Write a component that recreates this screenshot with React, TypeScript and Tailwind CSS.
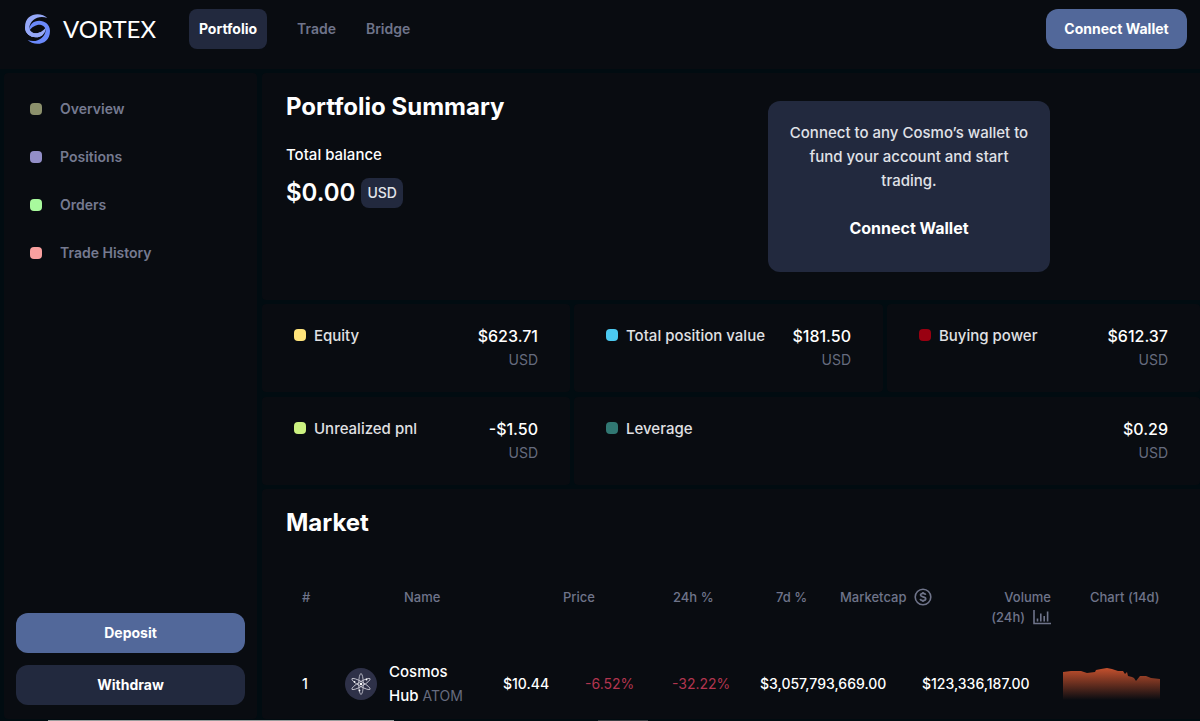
import React, { useState } from 'react';

interface Stat {
  label: string;
  value: string;
  dot: string;
  wide?: boolean;
}

const navItems = ['Portfolio', 'Trade', 'Bridge'];

const sideItems = [
  { label: 'Overview', dot: 'bg-[#8c916c]' },
  { label: 'Positions', dot: 'bg-[#938fc8]' },
  { label: 'Orders', dot: 'bg-[#a8fa9d]' },
  { label: 'Trade History', dot: 'bg-[#f9a09f]' }
];

const stats: Stat[] = [
  { label: 'Equity', value: '$623.71', dot: 'bg-[#ffe57c]' },
  { label: 'Total position value', value: '$181.50', dot: 'bg-[#4cc9f0]' },
  { label: 'Buying power', value: '$612.37', dot: 'bg-[#990011]' },
  { label: 'Unrealized pnl', value: '-$1.50', dot: 'bg-[#ccf281]' },
  { label: 'Leverage', value: '$0.29', dot: 'bg-[#317873]', wide: true }
];

const LOGO_SWIRL =
  'M142 54 C125 36 75 36 75 82 C75 102 92 112 107 112 C125 112 138 100 138 81 C130 94 115 101 105 100 C94 98 87 91 88 82 C91 60 115 44 142 54 Z';

const Logo = () => (
  <svg viewBox="72 39 81 96" className="h-8 w-[27px]" aria-hidden="true">
    <path d={LOGO_SWIRL} fill="#95a8f8" />
    <path d={LOGO_SWIRL} fill="#6b8afb" transform="rotate(180 112.5 87)" />
    <path d="M75 82 C75 102 92 112 107 112 C116 112 124 109 129 104 L120 97 C114 100 109 100 105 100 C94 98 87 91 88 82 Z" fill="#95a8f8" />
  </svg>
);

const DollarIcon = () => (
  <svg viewBox="0 0 18 18" className="h-[18px] w-[18px]" fill="none" stroke="currentColor" aria-hidden="true">
    <circle cx="9" cy="9" r="7.8" strokeWidth="1.6" />
    <path d="M11.6 6.9 C11.4 5.9 10.4 5.4 9 5.4 C7.5 5.4 6.5 6 6.5 7.1 C6.5 9.5 11.7 8.2 11.7 10.8 C11.7 12 10.6 12.6 9 12.6 C7.5 12.6 6.4 12 6.3 10.9 M9 4 V5.6 M9 12.4 V14" strokeWidth="1.7" />
  </svg>
);

const BarsIcon = () => (
  <svg viewBox="0 0 18 16" className="h-4 w-[18px]" fill="none" stroke="currentColor" strokeWidth="1.6" aria-hidden="true">
    <path d="M1 1 V14.5 H18" />
    <path d="M4.5 12.5 V9.5 M7.8 12.5 V4.5 M11.2 12.5 V7 M14.6 12.5 V2.5" />
  </svg>
);

const AtomIcon = () => (
  <svg viewBox="0 0 32 32" className="h-8 w-8 shrink-0" aria-hidden="true">
    <circle cx="16" cy="16" r="16" fill="#2e3148" />
    <g fill="none" stroke="#cfcfd9" strokeWidth="0.8">
      <ellipse cx="16" cy="16" rx="2.3" ry="10.5" />
      <ellipse cx="16" cy="16" rx="2.3" ry="10.5" transform="rotate(60 16 16)" />
      <ellipse cx="16" cy="16" rx="2.3" ry="10.5" transform="rotate(120 16 16)" />
    </g>
    <g fill="#ffffff">
      <circle cx="16" cy="16" r="1.2" />
      <circle cx="21.5" cy="11.5" r="0.9" />
      <circle cx="9.5" cy="13.8" r="0.9" />
      <circle cx="14.5" cy="22.5" r="0.9" />
    </g>
  </svg>
);

const PriceChart = () => (
  <svg viewBox="0 0 97 32" preserveAspectRatio="none" className="h-8 w-full" role="img" aria-label="14 day chart">
    <defs>
      <linearGradient id="price-fill" x1="0" y1="0" x2="0" y2="1">
        <stop offset="0" stopColor="#c4502d" />
        <stop offset="1" stopColor="#c4502d" stopOpacity="0" />
      </linearGradient>
    </defs>
    <path
      d="M0 4 L8 3 L18 3 L24 5 L32 4 L33 2 L38 1 L44 0 L49 1 L55 3 L60 3 L62 6 L64 4 L65 8 L69 9 L71 10 L73 13 L77 8 L83 8 L88 10 L97 11 V32 H0 Z"
      fill="url(#price-fill)"
    />
  </svg>
);

const App: React.FC = () => {
  const [active, setActive] = useState('Portfolio');

  return (
    <div className="flex min-h-screen flex-col bg-[#010c11] font-['Inter',sans-serif] text-sm text-white">
      {/* Header */}
      <header className="flex h-[69px] items-start justify-between bg-[#090c11] pt-[9px] pr-[13px] pl-6">
        <div className="flex items-center">
          <a href="#" className="flex items-center gap-3">
            <Logo />
            <span className="w-[94px] font-['Lato',sans-serif] text-2xl">VORTEX</span>
          </a>
          <nav className="ml-8 flex items-center gap-[30px]">
            {navItems.map(item => (
              <button
                key={item}
                type="button"
                onClick={() => setActive(item)}
                className={`h-10 rounded-lg ${active === item
                  ? 'w-[78px] bg-[#22293e] font-bold text-white'
                  : 'font-semibold text-[#6f748a]'
                  }`}
              >
                {item}
              </button>
            ))}
          </nav>
        </div>
        <button type="button" className="h-10 w-[141px] rounded-xl bg-[#52689a] font-bold">
          Connect Wallet
        </button>
      </header>

      <div className="flex flex-1 pt-1 pl-1">
        {/* Sidebar */}
        <aside className="flex w-[253px] shrink-0 flex-col justify-between rounded bg-[#090c11] px-3 pt-6 pb-[14px]">
          <ul className="space-y-6 pl-[14px]">
            {sideItems.map(item => (
              <li key={item.label}>
                <a href="#" className="flex h-6 items-center gap-[18px] font-semibold text-[#757a90]">
                  <span className={`h-3 w-3 rounded ${item.dot}`} />
                  {item.label}
                </a>
              </li>
            ))}
          </ul>
          <div className="flex flex-col gap-3">
            <button type="button" className="h-10 rounded-xl bg-[#52689a] font-bold">Deposit</button>
            <button type="button" className="h-10 rounded-xl bg-[#22293e] font-bold">Withdraw</button>
          </div>
        </aside>

        <main className="ml-[5px] flex min-w-0 flex-1 flex-col gap-1">
          {/* Summary */}
          <section className="flex min-h-[227px] items-start justify-between rounded-l bg-[#090c11] pr-[150px] pl-6">
            <div className="pt-4">
              <h1 className="text-2xl font-bold leading-9">Portfolio Summary</h1>
              <p className="mt-[18px] text-[15px] font-medium leading-6">Total balance</p>
              <div className="mt-[10px] flex items-center gap-[6px]">
                <span className="text-2xl font-semibold">$0.00</span>
                <span className="rounded-lg bg-[#22293e] px-[6px] py-[5px] font-medium text-[#e3e5ea]">USD</span>
              </div>
            </div>
            <div className="mt-7 w-[282px] rounded-xl bg-[#22293e] px-5 pt-5 pb-8 text-center">
              <p className="text-[15px] font-medium leading-6 text-[#e0e2e8]">
                Connect to any Cosmo’s wallet to fund your account and start trading.
              </p>
              <button type="button" className="mt-[23px] text-base font-bold leading-6">Connect Wallet</button>
            </div>
          </section>

          {/* Stats */}
          <section className="grid grid-cols-[308fr_309fr_313fr] gap-x-1 gap-y-[5px]">
            {stats.map(stat => (
              <div
                key={stat.label}
                className={`flex justify-between rounded bg-[#090c11] px-8 py-5 leading-6 ${stat.wide ? 'col-span-2' : ''}`}
              >
                <div className="flex items-start gap-2">
                  <span className={`mt-[5px] h-3 w-3 rounded ${stat.dot}`} />
                  <span className="text-[15px] font-medium leading-6 text-[#e0e1e4]">{stat.label}</span>
                </div>
                <div className="text-right">
                  <p className="text-base font-medium leading-6">{stat.value}</p>
                  <p className="text-[#666b7e]">USD</p>
                </div>
              </div>
            ))}
          </section>

          {/* Market */}
          <section className="flex-1 rounded-l bg-[#090c11] pt-4 pr-10 pl-6">
            <h2 className="text-2xl font-bold leading-9">Market</h2>
            <table className="mt-[46px] block w-full">
              <thead className="block text-[13px] leading-5 text-[#6f748a]">
                <tr className="grid grid-cols-[102fr_159fr_110fr_103fr_64fr_150fr_100fr_70fr] pl-4 text-left whitespace-nowrap *:min-w-0 *:font-medium">
                  <th>#</th>
                  <th>Name</th>
                  <th>Price</th>
                  <th>24h %</th>
                  <th>7d %</th>
                  <th>
                    <span className="flex items-center gap-2">Marketcap <DollarIcon /></span>
                  </th>
                  <th>
                    <span className="flex w-[61px] flex-col items-end">
                      Volume
                      <span className="flex items-center gap-2">(24h) <BarsIcon /></span>
                    </span>
                  </th>
                  <th>Chart (14d)</th>
                </tr>
              </thead>
              <tbody className="block pt-[33px]">
                <tr className="grid grid-cols-[43fr_158fr_82fr_87fr_88fr_162fr_141fr_97fr] items-center pl-4 font-medium whitespace-nowrap *:min-w-0">
                  <td>1</td>
                  <td className="flex items-center gap-3">
                    <AtomIcon />
                    <span className="text-[15px] font-medium leading-6">
                      Cosmos<br />
                      Hub <span className="text-sm font-normal text-[#666b7e]">ATOM</span>
                    </span>
                  </td>
                  <td>$10.44</td>
                  <td className="font-normal text-[#b2354f]">-6.52%</td>
                  <td className="font-normal text-[#b2354f]">-32.22%</td>
                  <td>$3,057,793,669.00</td>
                  <td>$123,336,187.00</td>
                  <td><PriceChart /></td>
                </tr>
              </tbody>
            </table>
          </section>
        </main>
      </div>

      <footer className="mt-px flex h-px pl-12">
        <div className="w-[346px] bg-[#9a9c9c]" />
        <div className="ml-[204px] w-[50px] bg-[#3a3f43]" />
      </footer>
    </div>
  );
};

export default App;
